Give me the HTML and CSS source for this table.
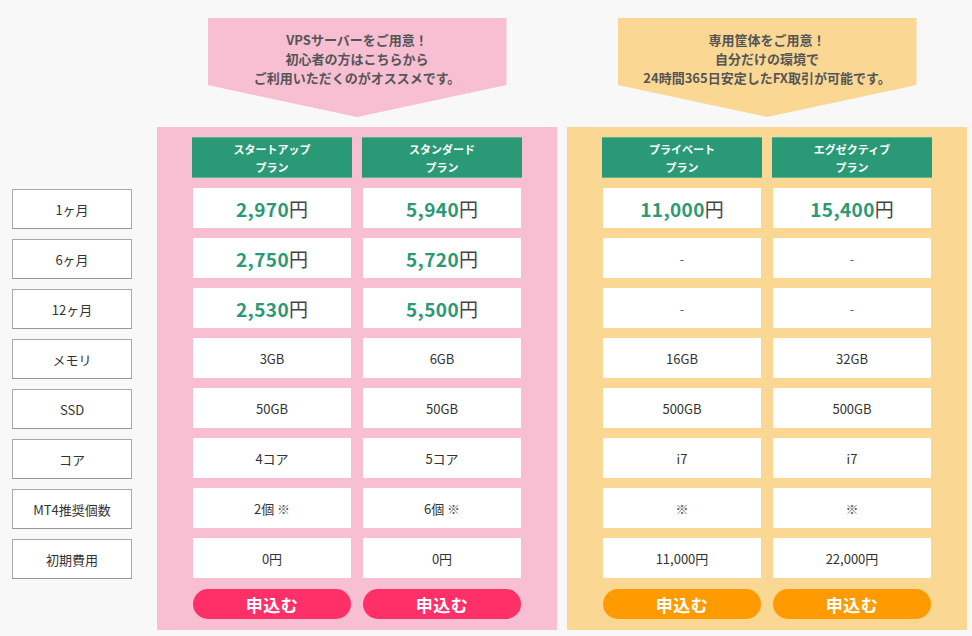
FILE: index.html
```html
<!DOCTYPE html>
<html lang="ja">
<head>
<meta charset="utf-8">
<link rel="stylesheet" href="styles.css">
</head>
<body>
<div class="page">
  <div class="labels">
    <div class="label">1ヶ月</div>
    <div class="label">6ヶ月</div>
    <div class="label">12ヶ月</div>
    <div class="label">メモリ</div>
    <div class="label">SSD</div>
    <div class="label">コア</div>
    <div class="label">MT4推奨個数</div>
    <div class="label">初期費用</div>
  </div>

  <div class="section pink">
    <div class="callout">VPSサーバーをご用意！<br>初心者の方はこちらから<br>ご利用いただくのがオススメです。</div>
    <div class="panel">
      <div class="head">スタートアップ<br>プラン</div>
      <div class="head">スタンダード<br>プラン</div>
      <div class="cell"><span class="num">2,970</span><span class="yen">円</span></div>
      <div class="cell"><span class="num">5,940</span><span class="yen">円</span></div>
      <div class="cell"><span class="num">2,750</span><span class="yen">円</span></div>
      <div class="cell"><span class="num">5,720</span><span class="yen">円</span></div>
      <div class="cell"><span class="num">2,530</span><span class="yen">円</span></div>
      <div class="cell"><span class="num">5,500</span><span class="yen">円</span></div>
      <div class="cell">3GB</div>
      <div class="cell">6GB</div>
      <div class="cell">50GB</div>
      <div class="cell">50GB</div>
      <div class="cell">4コア</div>
      <div class="cell">5コア</div>
      <div class="cell">2個 <span class="mark">※</span></div>
      <div class="cell">6個 <span class="mark">※</span></div>
      <div class="cell">0円</div>
      <div class="cell">0円</div>
      <a class="btn">申込む</a>
      <a class="btn">申込む</a>
    </div>
  </div>

  <div class="section yellow">
    <div class="callout">専用筐体をご用意！<br>自分だけの環境で<br>24時間365日安定したFX取引が可能です。</div>
    <div class="panel">
      <div class="head">プライベート<br>プラン</div>
      <div class="head">エグゼクティブ<br>プラン</div>
      <div class="cell"><span class="num">11,000</span><span class="yen">円</span></div>
      <div class="cell"><span class="num">15,400</span><span class="yen">円</span></div>
      <div class="cell dash">-</div>
      <div class="cell dash">-</div>
      <div class="cell dash">-</div>
      <div class="cell dash">-</div>
      <div class="cell">16GB</div>
      <div class="cell">32GB</div>
      <div class="cell">500GB</div>
      <div class="cell">500GB</div>
      <div class="cell">i7</div>
      <div class="cell">i7</div>
      <div class="cell"><span class="mark">※</span></div>
      <div class="cell"><span class="mark">※</span></div>
      <div class="cell">11,000円</div>
      <div class="cell">22,000円</div>
      <a class="btn">申込む</a>
      <a class="btn">申込む</a>
    </div>
  </div>
</div>
</body>
</html>
```

FILE: styles.css
```css
* { box-sizing: border-box; }
html, body { margin: 0; padding: 0; }
body {
  background: #f8f8f8;
  font-family: "Noto Sans CJK JP", "Noto Sans", sans-serif;
  color: #333;
  width: 972px;
  height: 636px;
  overflow: hidden;
}
.page {
  display: flex;
  align-items: flex-start;
  padding-top: 18px;
}
.labels {
  margin-left: 12px;
  width: 120px;
  padding-top: 171px;
  display: flex;
  flex-direction: column;
  gap: 10px;
}
.label {
  height: 40px;
  background: #fff;
  border: 1px solid #a8a8a8;
  border-bottom-color: #999;
  display: flex;
  align-items: center;
  justify-content: center;
  font-size: 13px;
  color: #333;
}
.section {
  width: 400px;
  display: flex;
  flex-direction: column;
  align-items: center;
}
.pink { margin-left: 25px; }
.yellow { margin-left: 10px; }
.callout {
  width: 299px;
  height: 99px;
  clip-path: polygon(0 0, 100% 0, 100% 67px, 50% 99px, 0 67px);
  text-align: center;
  font-size: 13px;
  font-weight: bold;
  line-height: 19px;
  color: #555;
  padding-top: 12px;
}
.pink .callout { background: #f8bfd3; }
.yellow .callout { background: #fad894; }
.panel {
  margin-top: 10px;
  width: 400px;
  height: 503px;
  padding: 10px 35px 0;
  display: grid;
  grid-template-columns: 160px 160px;
  grid-auto-rows: 40px;
  grid-template-rows: 41px;
  column-gap: 10px;
  row-gap: 10px;
}
.pink .panel { background: #f8bfd3; }
.yellow .panel { background: #fad894; }
.head {
  background: #2a9a76;
  border-top: 1px solid #57b594;
  border-bottom: 1px solid #5fb58f;
  color: #fff;
  font-size: 11px;
  font-weight: bold;
  line-height: 18px;
  text-align: center;
  padding-top: 2px;
}
.cell {
  margin: 0 1px;
  background: #fff;
  border: 1px solid rgba(255, 255, 255, 0.6);
  border-bottom-color: rgba(255, 255, 255, 0.5);
  display: flex;
  align-items: center;
  justify-content: center;
  font-size: 13px;
  color: #333;
  white-space: pre;
}
.num {
  color: #2a9a76;
  font-weight: bold;
  font-size: 19px;
  letter-spacing: 0.4px;
}
.yen {
  font-size: 19px;
  color: #444;
}
.mark { color: #555; }
.dash { color: #666; }
.btn {
  margin: 1px 1px 0;
  height: 30px;
  border-radius: 15px;
  color: #fff;
  font-weight: bold;
  font-size: 17px;
  display: flex;
  align-items: center;
  justify-content: center;
  letter-spacing: 0.5px;
}
.pink .btn { background: #ff3068; }
.yellow .btn { background: #ff9b00; }
```
